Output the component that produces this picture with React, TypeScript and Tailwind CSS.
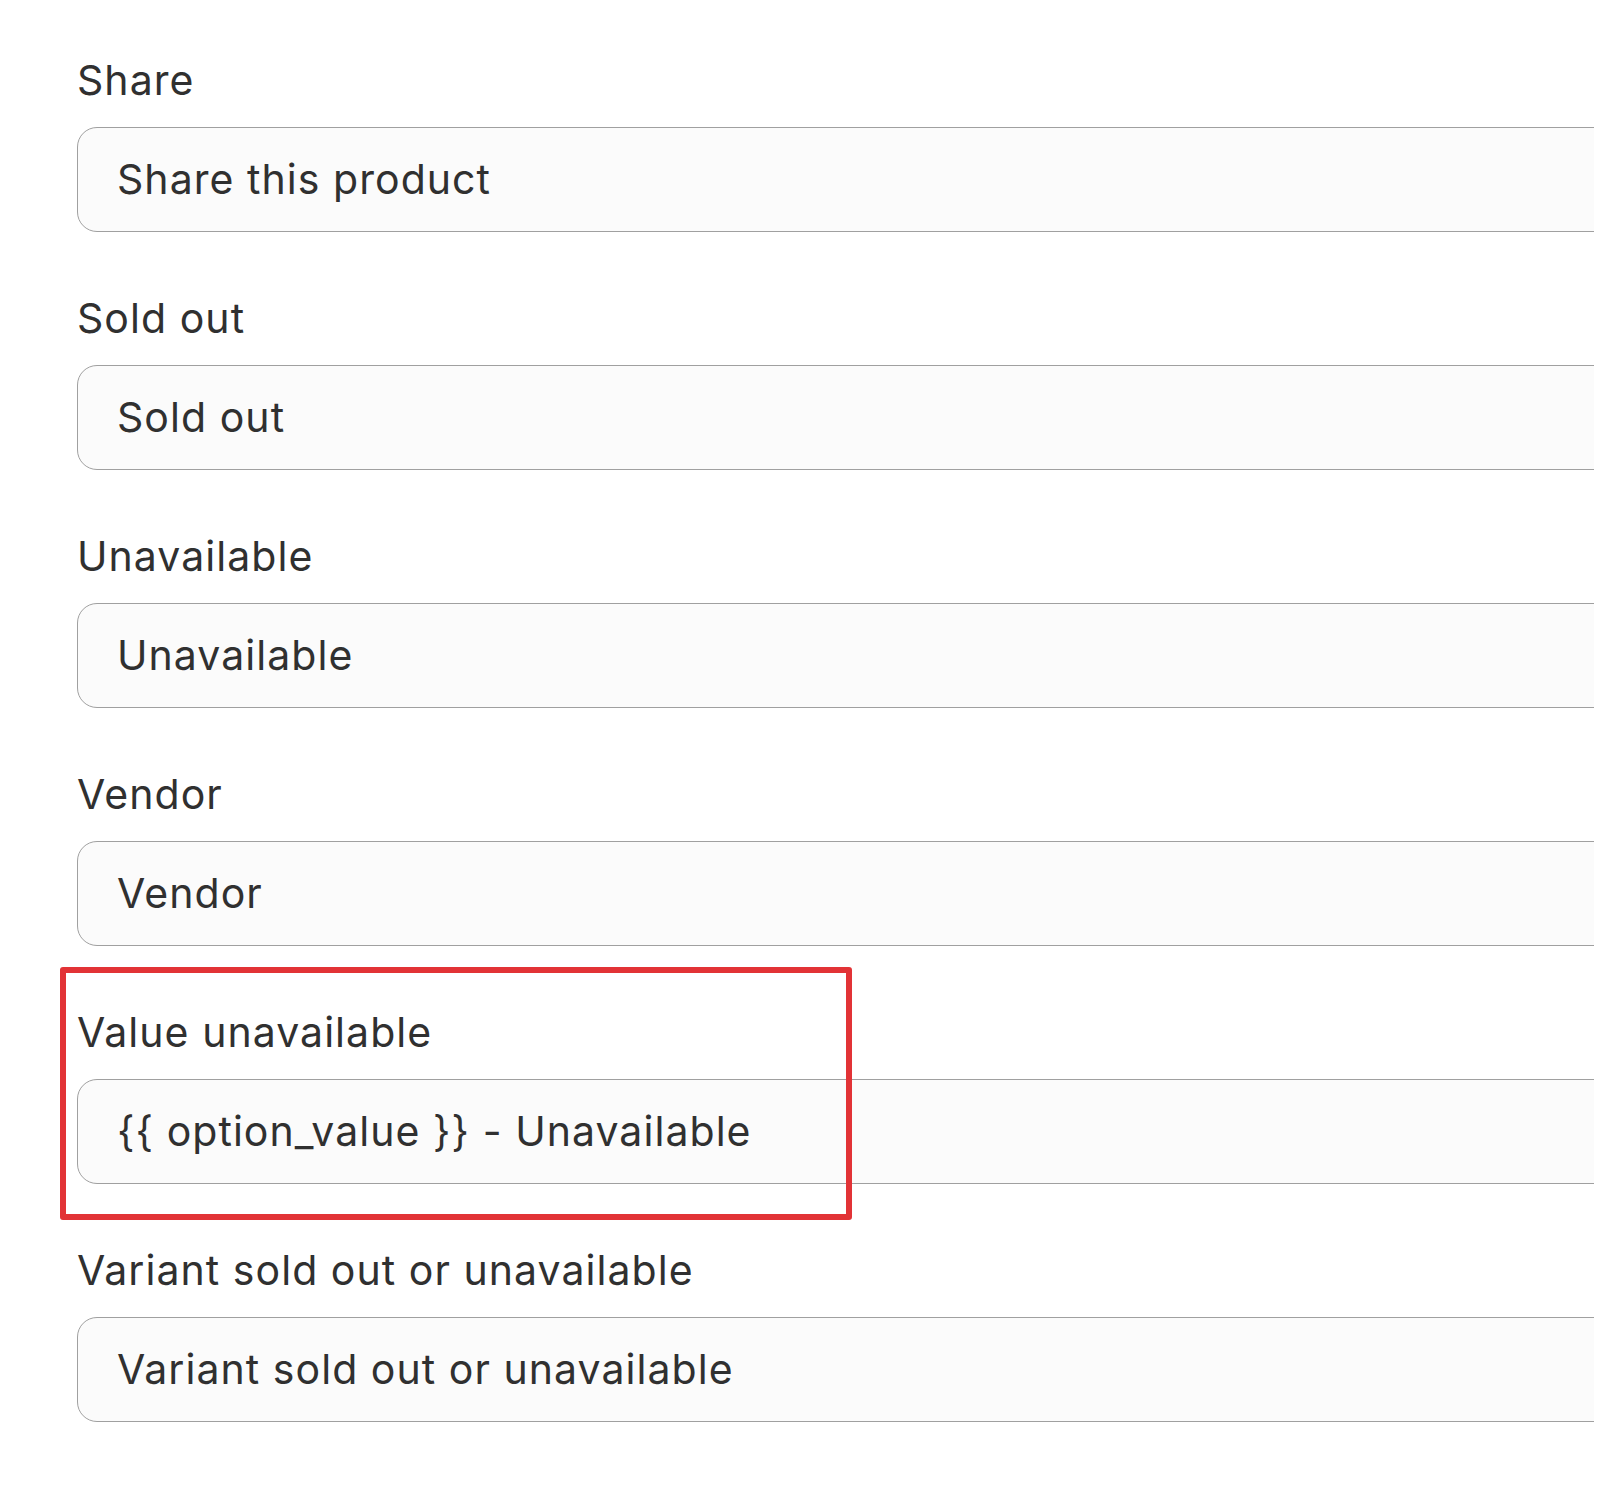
import React from "react";

const fields = [
  { label: "Share", value: "Share this product" },
  { label: "Sold out", value: "Sold out" },
  { label: "Unavailable", value: "Unavailable" },
  { label: "Vendor", value: "Vendor" },
  { label: "Value unavailable", value: "{{ option_value }} - Unavailable", highlight: true },
  { label: "Variant sold out or unavailable", value: "Variant sold out or unavailable" },
];

export default function App() {
  return (
    <div
      className="w-[1624px] h-[1495px] bg-white overflow-hidden"
      style={{ fontFamily: "Inter, 'Noto Sans', sans-serif" }}
    >
      <div className="w-[1594px] overflow-hidden pl-[77px] pt-[56px] flex flex-col gap-[62.6px] text-[#303030]">
        {fields.map((f) => (
          <div key={f.label} className="relative flex flex-col">
            {f.highlight && (
              <div className="absolute left-[-17px] top-[-41px] w-[792px] h-[253px] border-[6px] border-[#e23336] rounded-[3px] z-10 pointer-events-none" />
            )}
            <div className="h-[48px] leading-[48px] text-[41px] tracking-[1.05px] whitespace-nowrap">{f.label}</div>
            <div className="mt-[22.5px] h-[105px] w-[1560px] rounded-[20px] border-[1.5px] border-[#a0a0a0] bg-[#fbfbfb] flex items-center pl-[39px]">
              <span className="text-[41px] leading-[48px] tracking-[1.05px] whitespace-nowrap">{f.value}</span>
            </div>
          </div>
        ))}
      </div>
    </div>
  );
}
